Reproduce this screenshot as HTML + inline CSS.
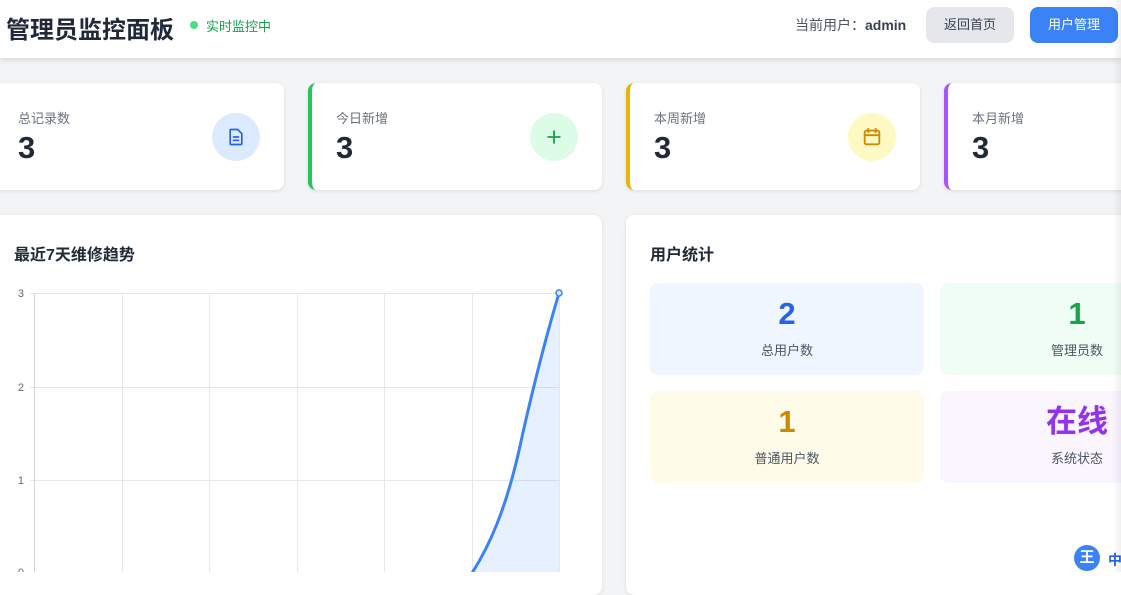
<!DOCTYPE html>
<html><head><meta charset="utf-8"><style>
*{margin:0;padding:0;box-sizing:border-box}
body{width:1121px;height:572px;overflow:hidden;background:#f3f4f6;font-family:"Liberation Sans","Noto Sans CJK SC",sans-serif;position:relative;color:#1f2937}
.abs{position:absolute}
.hdr{left:0;top:0;width:1121px;height:58px;background:#fff;box-shadow:0 2px 6px rgba(0,0,0,.12)}
.card{background:#fff;border-radius:8px;box-shadow:0 1px 4px rgba(0,0,0,.1)}
.lbl{font-size:13px;color:#6b7280}
.num{font-size:31px;font-weight:bold;color:#1f2937}
.ic{width:48px;height:48px;border-radius:50%;display:flex;align-items:center;justify-content:center}
.tile{border-radius:8px;width:274px;height:92px;text-align:center}
.tile .n{font-size:31px;font-weight:bold;margin-top:13px;line-height:36px}
.tile .l{font-size:13px;color:#4b5563;margin-top:8px}
</style></head><body>
<div class="abs hdr"></div>
<div class="abs" style="left:6px;top:10px;font-size:24px;font-weight:bold;color:#1f2937">管理员监控面板</div>
<div class="abs" style="left:190px;top:21px;width:8px;height:8px;border-radius:50%;background:#4ade80"></div>
<div class="abs" style="left:206px;top:16px;font-size:13px;color:#16a34a">实时监控中</div>
<div class="abs" style="left:795px;top:15px;font-size:14px;color:#4b5563">当前用户：<b style="color:#374151">admin</b></div>
<div class="abs" style="left:926px;top:7px;width:88px;height:36px;border-radius:8px;background:#e5e7eb;color:#374151;font-size:13px;text-align:center;line-height:36px">返回首页</div>
<div class="abs" style="left:1030px;top:7px;width:88px;height:36px;border-radius:8px;background:#3b82f6;color:#fff;font-size:13px;text-align:center;line-height:36px">用户管理</div>

<div class="abs card" style="left:-10px;top:83px;width:294px;height:107px"></div>
<div class="abs lbl" style="left:18px;top:108px">总记录数</div>
<div class="abs num" style="left:18px;top:130px">3</div>
<div class="abs ic" style="left:212px;top:113px;background:#dbeafe"><svg width="20" height="20" viewBox="0 0 24 24" fill="none" stroke="#2563eb" stroke-width="2" stroke-linejoin="round" stroke-linecap="round"><path d="M6 3h8l5 5v12a1 1 0 0 1-1 1H6a1 1 0 0 1-1-1V4a1 1 0 0 1 1-1z"/><path d="M9 12h6M9 16h6"/></svg></div>

<div class="abs card" style="left:308px;top:83px;width:294px;height:107px;border-left:4px solid #22c55e"></div>
<div class="abs lbl" style="left:336px;top:108px">今日新增</div>
<div class="abs num" style="left:336px;top:130px">3</div>
<div class="abs ic" style="left:530px;top:113px;background:#dcfce7"><svg width="20" height="20" viewBox="0 0 24 24" stroke="#16a34a" stroke-width="2.2" stroke-linecap="round"><path d="M12 5v14M5 12h14"/></svg></div>

<div class="abs card" style="left:626px;top:83px;width:294px;height:107px;border-left:4px solid #eab308"></div>
<div class="abs lbl" style="left:654px;top:108px">本周新增</div>
<div class="abs num" style="left:654px;top:130px">3</div>
<div class="abs ic" style="left:848px;top:113px;background:#fef9c3"><svg width="22" height="22" viewBox="0 0 24 24" fill="none" stroke="#ca8a04" stroke-width="2" stroke-linecap="round"><rect x="4" y="5" width="16" height="15" rx="2"/><path d="M8 3v4M16 3v4M4 10h16"/></svg></div>

<div class="abs card" style="left:944px;top:83px;width:294px;height:107px;border-left:4px solid #a855f7"></div>
<div class="abs lbl" style="left:972px;top:108px">本月新增</div>
<div class="abs num" style="left:972px;top:130px">3</div>

<div class="abs card" style="left:-10px;top:215px;width:612px;height:380px"></div>
<div class="abs" style="left:14px;top:241px;font-size:16px;font-weight:bold;color:#1f2937">最近7天维修趋势</div>
<svg class="abs" style="left:0;top:280px" width="602" height="292" viewBox="0 280 602 292">
<g stroke="#e5e7eb" stroke-width="1">
<path d="M30 293.5H559M30 387.5H559M30 480.5H559"/>
<path d="M122.5 293V572M209.5 293V572M297.5 293V572M384.5 293V572M472.5 293V572M559.5 293V572"/>
</g>
<path d="M34.5 293V572" stroke="#d1d5db"/>
<g font-family="Liberation Sans,sans-serif" font-size="11" fill="#666" text-anchor="end">
<text x="24" y="297">3</text><text x="24" y="391">2</text><text x="24" y="484">1</text><text x="24" y="576">0</text></g>
<path d="M472 573C490 545 505 510 518 455C530 400 545 340 559 293V573Z" fill="rgba(59,130,246,.12)"/>
<path d="M472 573C490 545 505 510 518 455C530 400 545 340 559 293" fill="none" stroke="#3b82f6" stroke-width="3"/>
<circle cx="559" cy="293" r="3" fill="#dbeafe" stroke="#3b82f6" stroke-width="1.5"/>
</svg>

<div class="abs card" style="left:626px;top:215px;width:520px;height:380px"></div>
<div class="abs" style="left:650px;top:241px;font-size:16px;font-weight:bold;color:#1f2937">用户统计</div>
<div class="abs tile" style="left:650px;top:283px;background:#eff6ff"><div class="n" style="color:#2563eb">2</div><div class="l">总用户数</div></div>
<div class="abs tile" style="left:940px;top:283px;background:#f0fdf4"><div class="n" style="color:#16a34a">1</div><div class="l">管理员数</div></div>
<div class="abs tile" style="left:650px;top:391px;background:#fefce8"><div class="n" style="color:#ca8a04">1</div><div class="l">普通用户数</div></div>
<div class="abs tile" style="left:940px;top:391px;background:#faf5ff"><div class="n" style="color:#9333ea">在线</div><div class="l">系统状态</div></div>

<div class="abs" style="left:1074px;top:545px;width:26px;height:26px;border-radius:50%;background:#3b82f6;color:#fff;font-size:15px;font-weight:bold;text-align:center;line-height:26px">王</div>
<div class="abs" style="left:1108px;top:550px;font-size:14px;font-weight:bold;color:#2563eb">中</div>
<div class="abs" style="left:1112px;top:0;width:9px;height:572px;background:linear-gradient(to right,rgba(0,0,0,0),rgba(0,0,0,.06))"></div>
</body></html>
